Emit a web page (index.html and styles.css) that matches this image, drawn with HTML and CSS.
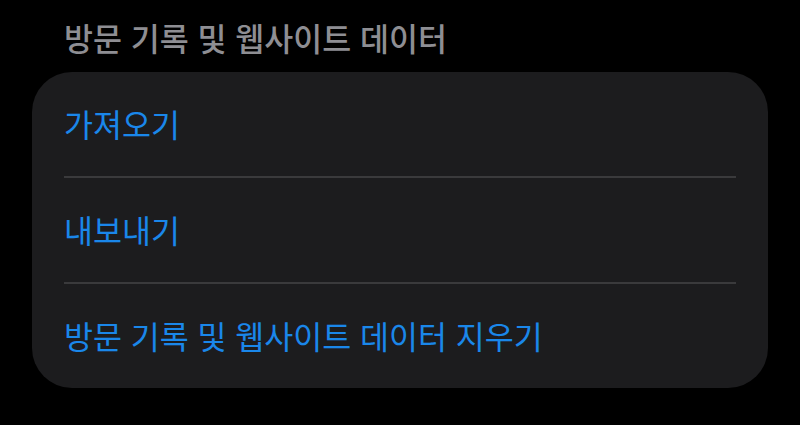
FILE: index.html
```html
<!DOCTYPE html>
<html lang="ko">
<head>
<meta charset="utf-8">
<link rel="stylesheet" href="styles.css">
</head>
<body>
<div class="page">
  <div class="section-title">방문 기록 및 웹사이트 데이터</div>
  <div class="card">
    <div class="row">가져오기</div>
    <div class="sep"></div>
    <div class="row">내보내기</div>
    <div class="sep"></div>
    <div class="row">방문 기록 및 웹사이트 데이터 지우기</div>
  </div>
</div>
</body>
</html>
```
FILE: styles.css
```css
html, body {
  margin: 0;
  padding: 0;
  background: #000;
}
.page {
  width: 800px;
  height: 425px;
  padding: 0 32px;
  box-sizing: border-box;
  font-family: "Noto Sans CJK KR", "Noto Sans", sans-serif;
}
.section-title {
  height: 72px;
  box-sizing: border-box;
  padding: 17px 0 0 32px;
  font-size: 31.5px;
  font-weight: 500;
  line-height: 40px;
  color: #8e8e93;
}
.card {
  background: #1c1c1e;
  border-radius: 40px;
  height: 316px;
  display: flex;
  flex-direction: column;
}
.row {
  height: 104px;
  display: flex;
  align-items: center;
  padding-left: 32px;
  padding-bottom: 2px;
  box-sizing: border-box;
  font-size: 31.5px;
  color: #1a87ea;
}
.sep {
  height: 2px;
  margin: 0 32px;
  background: #3a3a3c;
}
```
